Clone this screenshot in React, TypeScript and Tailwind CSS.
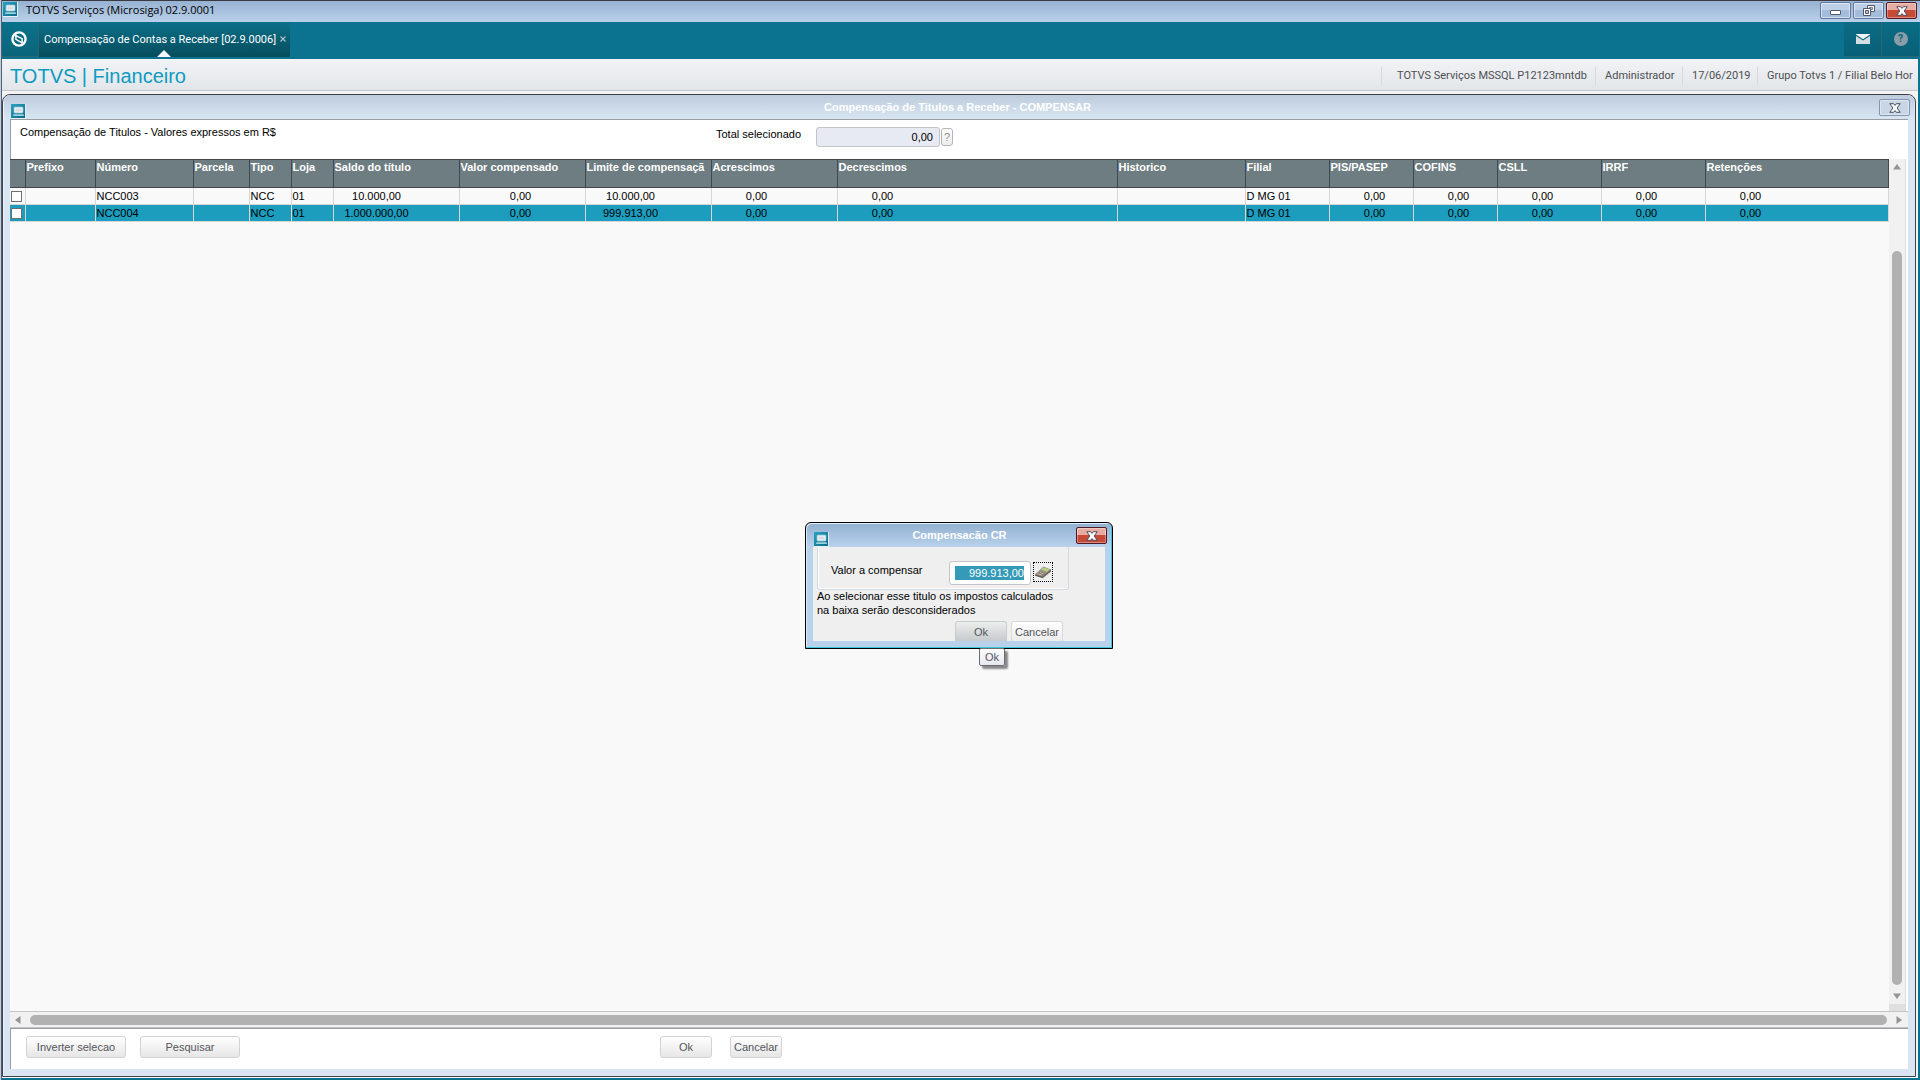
import type { ReactNode } from "react";

type Column = {
  label: string;
  width?: number;
  values: [string, string];
  numeric?: boolean;
};

const columns: Column[] = [
  { label: "Prefixo", width: 70, values: ["", ""] },
  { label: "Número", width: 98, values: ["NCC003", "NCC004"] },
  { label: "Parcela", width: 56, values: ["", ""] },
  { label: "Tipo", width: 42, values: ["NCC", "NCC"] },
  { label: "Loja", width: 42, values: ["01", "01"] },
  { label: "Saldo do título", width: 126, values: ["10.000,00", "1.000.000,00"], numeric: true },
  { label: "Valor compensado", width: 126, values: ["0,00", "0,00"], numeric: true },
  { label: "Limite de compensaçã", width: 126, values: ["10.000,00", "999.913,00"], numeric: true },
  { label: "Acrescimos", width: 126, values: ["0,00", "0,00"], numeric: true },
  { label: "Decrescimos", width: 280, values: ["0,00", "0,00"], numeric: true },
  { label: "Historico", width: 128, values: ["", ""] },
  { label: "Filial", width: 84, values: ["D MG 01", "D MG 01"] },
  { label: "PIS/PASEP", width: 84, values: ["0,00", "0,00"], numeric: true },
  { label: "COFINS", width: 84, values: ["0,00", "0,00"], numeric: true },
  { label: "CSLL", width: 104, values: ["0,00", "0,00"], numeric: true },
  { label: "IRRF", width: 104, values: ["0,00", "0,00"], numeric: true },
  { label: "Retenções", values: ["0,00", "0,00"], numeric: true },
];

function AppIcon() {
  return (
    <svg viewBox="0 0 15 15" className="size-[15px] shrink-0" aria-hidden="true">
      <defs>
        <linearGradient id="appBg" x1="0" y1="0" x2="1" y2="1">
          <stop offset="0" stopColor="#2aa3c0" />
          <stop offset="1" stopColor="#0a6a88" />
        </linearGradient>
      </defs>
      <rect width="15" height="15" fill="#e6f1f6" />
      <rect width="14" height="14" fill="url(#appBg)" />
      <rect x="3" y="3" width="9" height="6" rx="0.8" fill="#f1f5f7" stroke="#8cc4d4" strokeWidth="0.8" />
      <rect x="4.5" y="4.5" width="6" height="3" fill="#d5dde2" />
      <path d="M2.5 10.2h10l.5 1.8h-11z" fill="#9fd0de" />
    </svg>
  );
}

function CloseGlyph({ fill = "#ffffff" }: { fill?: string }) {
  return (
    <svg viewBox="0 0 12 10" className="h-[10px] w-[12px]" aria-hidden="true">
      <path
        d="M.8 .7h3.8L6 2.4 7.4.7h3.8L8.2 5l3 4.3H7.4L6 7.6 4.6 9.3H.8L3.8 5z"
        fill={fill}
        stroke="#4c4f61"
        strokeWidth="1"
        strokeLinejoin="round"
      />
    </svg>
  );
}

function RedClose({ label }: { label: string }) {
  return (
    <button
      type="button"
      aria-label={label}
      className="flex h-[17px] w-[31px] items-center justify-center rounded-[2px] border border-[#4d1a25] bg-linear-to-b from-[#e9aca3] from-45% to-[#c64a36] to-50% shadow-[inset_0_0_0_1px_rgba(255,255,255,0.35)]"
    >
      <CloseGlyph />
    </button>
  );
}

function FrameButton({ label, children }: { label: string; children: ReactNode }) {
  return (
    <button
      type="button"
      aria-label={label}
      className="flex h-[17px] w-[31px] items-center justify-center rounded-[2px] border border-[#62779b] bg-linear-to-b from-[#bdd0e8] from-45% to-[#a3bcdc] to-50% shadow-[inset_0_0_0_1px_rgba(255,255,255,0.5)]"
    >
      {children}
    </button>
  );
}

function PushButton({ children, wide = false }: { children: ReactNode; wide?: boolean }) {
  return (
    <button
      type="button"
      className={`${wide ? "w-[100px]" : "w-[52px]"} h-[22px] shrink-0 rounded-[3px] border border-[#d3d3d3] bg-linear-to-b from-white to-[#e6e6e6] text-center text-[#53565b]`}
    >
      {children}
    </button>
  );
}

function TitleBar() {
  return (
    <header className="flex h-[22px] shrink-0 items-start border-t border-[#3a3a42] bg-linear-to-b from-[#97b1d1] to-[#b9d1ea] pt-px pr-[3px] pl-px">
      <AppIcon />
      <h1 className="ml-2 font-['Open_Sans',sans-serif] text-[11px] leading-4 text-black">
        TOTVS Serviços (Microsiga) 02.9.0001
      </h1>
      <div className="ml-auto flex gap-[2px]">
        <FrameButton label="Minimizar">
          <span className="mt-[3px] h-[5px] w-[11px] rounded-[1px] border border-[#53586c] bg-white" />
        </FrameButton>
        <FrameButton label="Restaurar">
          <svg viewBox="0 0 12 11" className="h-[11px] w-[12px]" aria-hidden="true">
            <path d="M4.5.5h7v6h-7z" fill="#fff" stroke="#53586c" />
            <path d="M6.5 2.5h3v2h-3z" fill="#b4c8e0" stroke="#53586c" strokeWidth="0.7" />
            <path d="M.5 3.5h7v7h-7z" fill="#fff" stroke="#53586c" />
            <path d="M2.5 5.5h3v3h-3z" fill="#b4c8e0" stroke="#53586c" />
          </svg>
        </FrameButton>
        <RedClose label="Fechar" />
      </div>
    </header>
  );
}

function TabStrip() {
  return (
    <nav className="flex h-[37px] shrink-0 items-start bg-[#0b728f] pr-px font-[Roboto,sans-serif] text-[11px]">
      <button
        type="button"
        aria-label="Início"
        className="flex h-[35px] w-[37px] items-center justify-center border-r border-b border-[#2d6470] bg-linear-to-b from-[#0b728b] to-[#0a657b] pr-[2px]"
      >
        <svg viewBox="0 0 16 16" className="size-[16px]" fill="none" stroke="#fff" aria-hidden="true">
          <circle cx="8" cy="8" r="6.6" strokeWidth="2.4" />
          <path d="M4.9 3.6v4.8l6.2 3.4" strokeWidth="1.5" />
          <path d="M11.1 12.4V7.6L4.9 4.6" strokeWidth="1.5" />
        </svg>
      </button>
      <div className="relative flex h-[35px] items-center bg-linear-to-b from-[#0b7089] to-[#064d5d] pr-[3px] pl-[5px]">
        <a href="#compensacao" className="leading-4 whitespace-nowrap text-white">
          Compensação de Contas a Receber [02.9.0006]
        </a>
        <button type="button" aria-label="Fechar aba" className="mb-[2px] ml-[3px] flex size-[8px] items-center justify-center">
          <svg viewBox="0 0 8 8" className="size-[8px]" stroke="#a9c6ce" strokeWidth="1.1" aria-hidden="true">
            <path d="M1.5 1.5l5 5M6.5 1.5l-5 5" />
          </svg>
        </button>
        <svg viewBox="0 0 14 7" className="absolute bottom-0 left-[118px] h-[7px] w-[14px]" aria-hidden="true">
          <path d="M0 7L7 0l7 7z" fill="#f2f3f5" />
        </svg>
      </div>
      <div className="ml-auto flex">
        <button
          type="button"
          aria-label="Mensagens"
          className="flex h-[35px] w-[38px] items-center justify-center border-r border-b border-[#2d6470] bg-linear-to-b from-[#0a6c84] to-[#086078]"
        >
          <svg viewBox="0 0 14 10" className="h-[10px] w-[14px]" aria-hidden="true">
            <path d="M0 2l7 4.6L14 2v8H0z" fill="#d5dfe3" />
            <path d="M0 0h14v.6L7 5.2 0 .6z" fill="#f2f5f6" />
          </svg>
        </button>
        <button
          type="button"
          aria-label="Ajuda"
          className="flex h-[35px] w-[37px] items-center justify-center border-b border-[#2d6470] bg-linear-to-b from-[#0a6c84] to-[#086078]"
        >
          <span className="flex size-[14px] items-center justify-center rounded-full bg-[#8b9ea8] text-[11px] leading-3 font-bold text-[#0a667e]">
            ?
          </span>
        </button>
      </div>
    </nav>
  );
}

function Heading() {
  return (
    <div className="flex h-8 shrink-0 items-center border-b border-[#c3c6ca] bg-linear-to-b from-[#f2f3f5] to-[#e2e6ea] pt-[2px] pl-2">
      <h2 className="text-[20px] leading-[30px] text-[#0e9bc1]">TOTVS | Financeiro</h2>
      <ul className="ml-auto flex font-[Roboto,sans-serif] text-[11px] leading-[18px] whitespace-nowrap text-[#4d4f52]">
        <li className="w-[214px] border-l border-[#d6dadc] pl-[15px]">TOTVS Serviços MSSQL P12123mntdb</li>
        <li className="w-[87px] border-l border-[#d6dadc] pl-[9px]">Administrador</li>
        <li className="w-[75px] border-l border-[#d6dadc] pl-[9px]">17/06/2019</li>
        <li className="w-[161px] border-l border-[#d6dadc] pl-[9px]">Grupo Totvs 1 / Filial Belo Hor</li>
      </ul>
    </div>
  );
}

function TitlesTable() {
  return (
    <table className="w-full table-fixed border-collapse text-left">
      <colgroup>
        <col className="w-[15px]" />
        {columns.map((c) => (
          <col key={c.label} style={{ width: c.width }} />
        ))}
      </colgroup>
      <thead>
        <tr className="h-[28px] bg-[#6e7d81] align-top text-white">
          <th className="border-y border-r border-[#43464f] p-0" aria-label="Selecionar" />
          {columns.map((c) => (
            <th
              key={c.label}
              scope="col"
              className="overflow-hidden border-y border-r border-[#43464f] p-0 pl-px leading-[14px] font-bold whitespace-nowrap"
            >
              {c.label}
            </th>
          ))}
        </tr>
      </thead>
      <tbody>
        {[0, 1].map((row) => (
          <tr key={row} className={row === 1 ? "h-[17px] bg-[#1d9dbe]" : "h-[17px]"}>
            <td className="border-r border-b border-[#d6d6d6] p-0">
              <input
                type="checkbox"
                aria-label={columns[1].values[row]}
                className="ml-px block size-[11px] appearance-none border border-[#6f6f6f] bg-white"
              />
            </td>
            {columns.map((c) => (
              <td key={c.label} className="border-r border-b border-[#d6d6d6] p-0 pl-px leading-4 whitespace-nowrap text-black">
                {c.numeric ? (
                  <span
                    className={
                      c.label === "Valor compensado"
                        ? "block w-[120px] text-center"
                        : c.label === "Saldo do título"
                          ? "block w-[84px] text-center"
                          : "block w-[88px] text-center"
                    }
                  >
                    {c.values[row]}
                  </span>
                ) : (
                  c.values[row]
                )}
              </td>
            ))}
          </tr>
        ))}
      </tbody>
    </table>
  );
}

function Arrow({ d }: { d: string }) {
  return (
    <svg viewBox="0 0 8 8" className="size-[8px] shrink-0" aria-hidden="true">
      <path d={d} fill="#949494" />
    </svg>
  );
}

function Dialog() {
  return (
    <section
      aria-label="Compensacão CR"
      className="relative h-[127px] w-[308px] rounded-t-md border border-black bg-linear-to-b from-[#93b0d1] to-[#b8d2ec] to-[24px] px-[7px] pb-[7px] shadow-[inset_-1px_-1px_0_#3cc5dc,inset_1px_1px_0_#e0ecf7]"
    >
      <div className="flex h-[24px] items-start">
        <div className="mt-[9px] ml-px">
          <AppIcon />
        </div>
        <h3 className="mt-1 flex-1 pl-[42px] text-center leading-4 font-bold text-white">Compensacão CR</h3>
        <div className="mt-1 -mr-[2px] ml-[28px]">
          <RedClose label="Fechar diálogo" />
        </div>
      </div>
      <div className="flex h-[94px] flex-col bg-[#efefef] pl-1">
        <div className="flex h-[43px] w-[252px] items-start rounded-b-[3px] border border-t-0 border-[#d0dbe6] pl-[13px] shadow-[inset_1px_-1px_0_#fff]">
          <label htmlFor="valor" className="mt-[15px] w-[118px] leading-4 text-black">
            Valor a compensar
          </label>
          <div className="mt-[14px] flex h-[24px] w-[82px] items-center rounded-[3px] border border-[#c4c6ca] bg-white pl-[5px]">
            <input
              id="valor"
              defaultValue="999.913,00"
              className="h-[14px] w-[69px] bg-[#349ab8] p-0 text-right leading-[14px] text-white outline-none"
            />
          </div>
          <button
            type="button"
            aria-label="Calculadora"
            className="mt-[15px] ml-[2px] flex size-[20px] items-center justify-center border border-dotted border-black"
          >
            <svg viewBox="0 0 18 14" className="h-[14px] w-[18px]" aria-hidden="true">
              <path d="M1 9.2v1.6l7.6 2.4L17 6.4V4.6z" fill="#6b5f55" />
              <path d="M1 9.2L9.4 1.6 17 4.4 8.6 11.6z" fill="#a09486" />
              <path d="M9.6 2.4l6 2.2-2.6 2.2-6-2.3z" fill="#b4cf86" />
              <path d="M3.4 9l3.2-2.8 5.4 2-3.2 2.6z" fill="#857b70" />
              <path d="M4.6 8.9l3 1M6.2 7.5l3.4 1.2" stroke="#d6cfc4" strokeWidth="0.8" />
            </svg>
          </button>
        </div>
        <p className="-mt-px w-[250px] leading-[14px] text-black">
          Ao selecionar esse titulo os impostos calculados na baixa serão desconsiderados
        </p>
        <div className="mt-auto flex gap-1 pl-[138px]">
          <button
            type="button"
            className="h-[20px] w-[52px] rounded-t-[3px] border border-b-0 border-[#c9cccf] bg-linear-to-b from-[#eceeee] to-[#c6cacc] text-[#53565b]"
          >
            Ok
          </button>
          <button
            type="button"
            className="h-[20px] w-[52px] rounded-t-[3px] border border-b-0 border-[#d8d8d8] bg-linear-to-b from-white to-[#ececec] text-[#53565b]"
          >
            Cancelar
          </button>
        </div>
      </div>
      <div
        role="tooltip"
        className="absolute top-[125px] left-[173px] flex h-[18px] w-[26px] items-center justify-center rounded-[2px] border border-[#6d6d70] bg-linear-to-b from-white to-[#e6e7f1] text-[#55575c] shadow-[3px_3px_2px_rgba(0,0,0,0.45)]"
      >
        Ok
      </div>
    </section>
  );
}

export default function App() {
  return (
    <div className="relative flex h-screen bg-[#0b728f] font-['Liberation_Sans',Arial,sans-serif] text-[11px] leading-4">
      <div className="w-[2px] shrink-0 border-r border-[#55606e] bg-[#bcd0e6]" />
      <div className="flex min-w-0 flex-1 flex-col">
        <TitleBar />
        <TabStrip />
        <div className="mr-[2px] flex min-h-0 flex-1 flex-col">
          <Heading />
          <main className="flex min-h-0 flex-1 flex-col bg-[#f4f4f6] pt-[3px] pr-[2px]">
            <section className="flex min-h-0 flex-1 flex-col rounded-t-lg border border-[#3f4147] bg-[#d9e5f2] px-[7px] pb-[7px] shadow-[inset_1px_1px_0_#f0f4fa]">
              <div className="-mx-[6px] flex h-[24px] shrink-0 items-start rounded-t-md bg-linear-to-b from-[#becbdc] to-[#d8e6f3] pr-1 pl-[7px]">
                <div className="mt-[9px]">
                  <AppIcon />
                </div>
                <h3 className="mt-1 flex-1 pl-[10px] text-center leading-4 font-bold text-white">
                  Compensação de Titulos a Receber - COMPENSAR
                </h3>
                <button
                  type="button"
                  aria-label="Fechar janela"
                  className="mt-1 flex h-[17px] w-[31px] items-center justify-center rounded-[2px] border border-[#8394b4] bg-[#c9d6e6] shadow-[inset_0_0_0_1px_rgba(255,255,255,0.4)]"
                >
                  <CloseGlyph fill="#f4f6fa" />
                </button>
              </div>
              <div className="flex h-[40px] shrink-0 border-t border-l border-[#9a9ea3] bg-white pl-[9px]">
                <p className="mt-1 w-[696px] text-black">Compensação de Titulos - Valores expressos em R$</p>
                <label htmlFor="total" className="mt-[6px] w-[100px] text-black">
                  Total selecionado
                </label>
                <input
                  id="total"
                  readOnly
                  value="0,00"
                  className="mt-[7px] h-[20px] w-[124px] rounded-[3px] border border-[#c2c4c8] bg-[#e7eaf2] px-[6px] text-right text-black"
                />
                <button
                  type="button"
                  aria-label="Ajuda do total"
                  className="mt-2 ml-px h-[18px] w-[12px] rounded-[3px] border border-[#b5b5b5] bg-linear-to-b from-white to-[#ececec] text-center text-[#8f8f8f]"
                >
                  ?
                </button>
              </div>
              <div className="flex min-h-0 flex-1 bg-[#f9f9f9]">
                <div className="min-w-0 flex-1">
                  <TitlesTable />
                </div>
                <div className="flex w-[17px] shrink-0 flex-col items-center border-r border-[#dcdcdc] bg-[#f1f1f1] pt-1">
                  <Arrow d="M0 6.5L4 1l4 5.5z" />
                  <div className="mt-[80px] w-[10px] flex-1 rounded-full bg-[#b1b1b1]" />
                  <div className="mt-[7px] mb-1">
                    <Arrow d="M0 1.5L4 7l4-5.5z" />
                  </div>
                  <div className="h-[7px] w-full bg-[#e0e0e0]" />
                </div>
                <div className="w-[2px] shrink-0 bg-white" />
              </div>
              <div className="flex h-[17px] shrink-0 items-center border-y border-[#c4c4c4] bg-[#f1f1f1] pr-[5px] pl-1">
                <Arrow d="M6.5 0L1 4l5.5 4z" />
                <div className="mx-2 h-[10px] flex-1 rounded-full bg-[#b1b1b1]" />
                <Arrow d="M1.5 0L7 4 1.5 8z" />
              </div>
              <footer className="flex h-[41px] shrink-0 border-t border-l border-[#9a9ea3] bg-white pt-[7px] pl-[15px]">
                <PushButton wide>Inverter selecao</PushButton>
                <div className="ml-[14px]">
                  <PushButton wide>Pesquisar</PushButton>
                </div>
                <div className="ml-[420px] flex gap-[18px]">
                  <PushButton>Ok</PushButton>
                  <PushButton>Cancelar</PushButton>
                </div>
              </footer>
            </section>
            <div className="h-px bg-white" />
          </main>
          <div className="h-[2px] shrink-0 bg-[#0b728f]" />
        </div>
      </div>
      <div className="absolute inset-x-0 top-[522px] flex justify-center pr-[2px]">
        <Dialog />
      </div>
    </div>
  );
}
